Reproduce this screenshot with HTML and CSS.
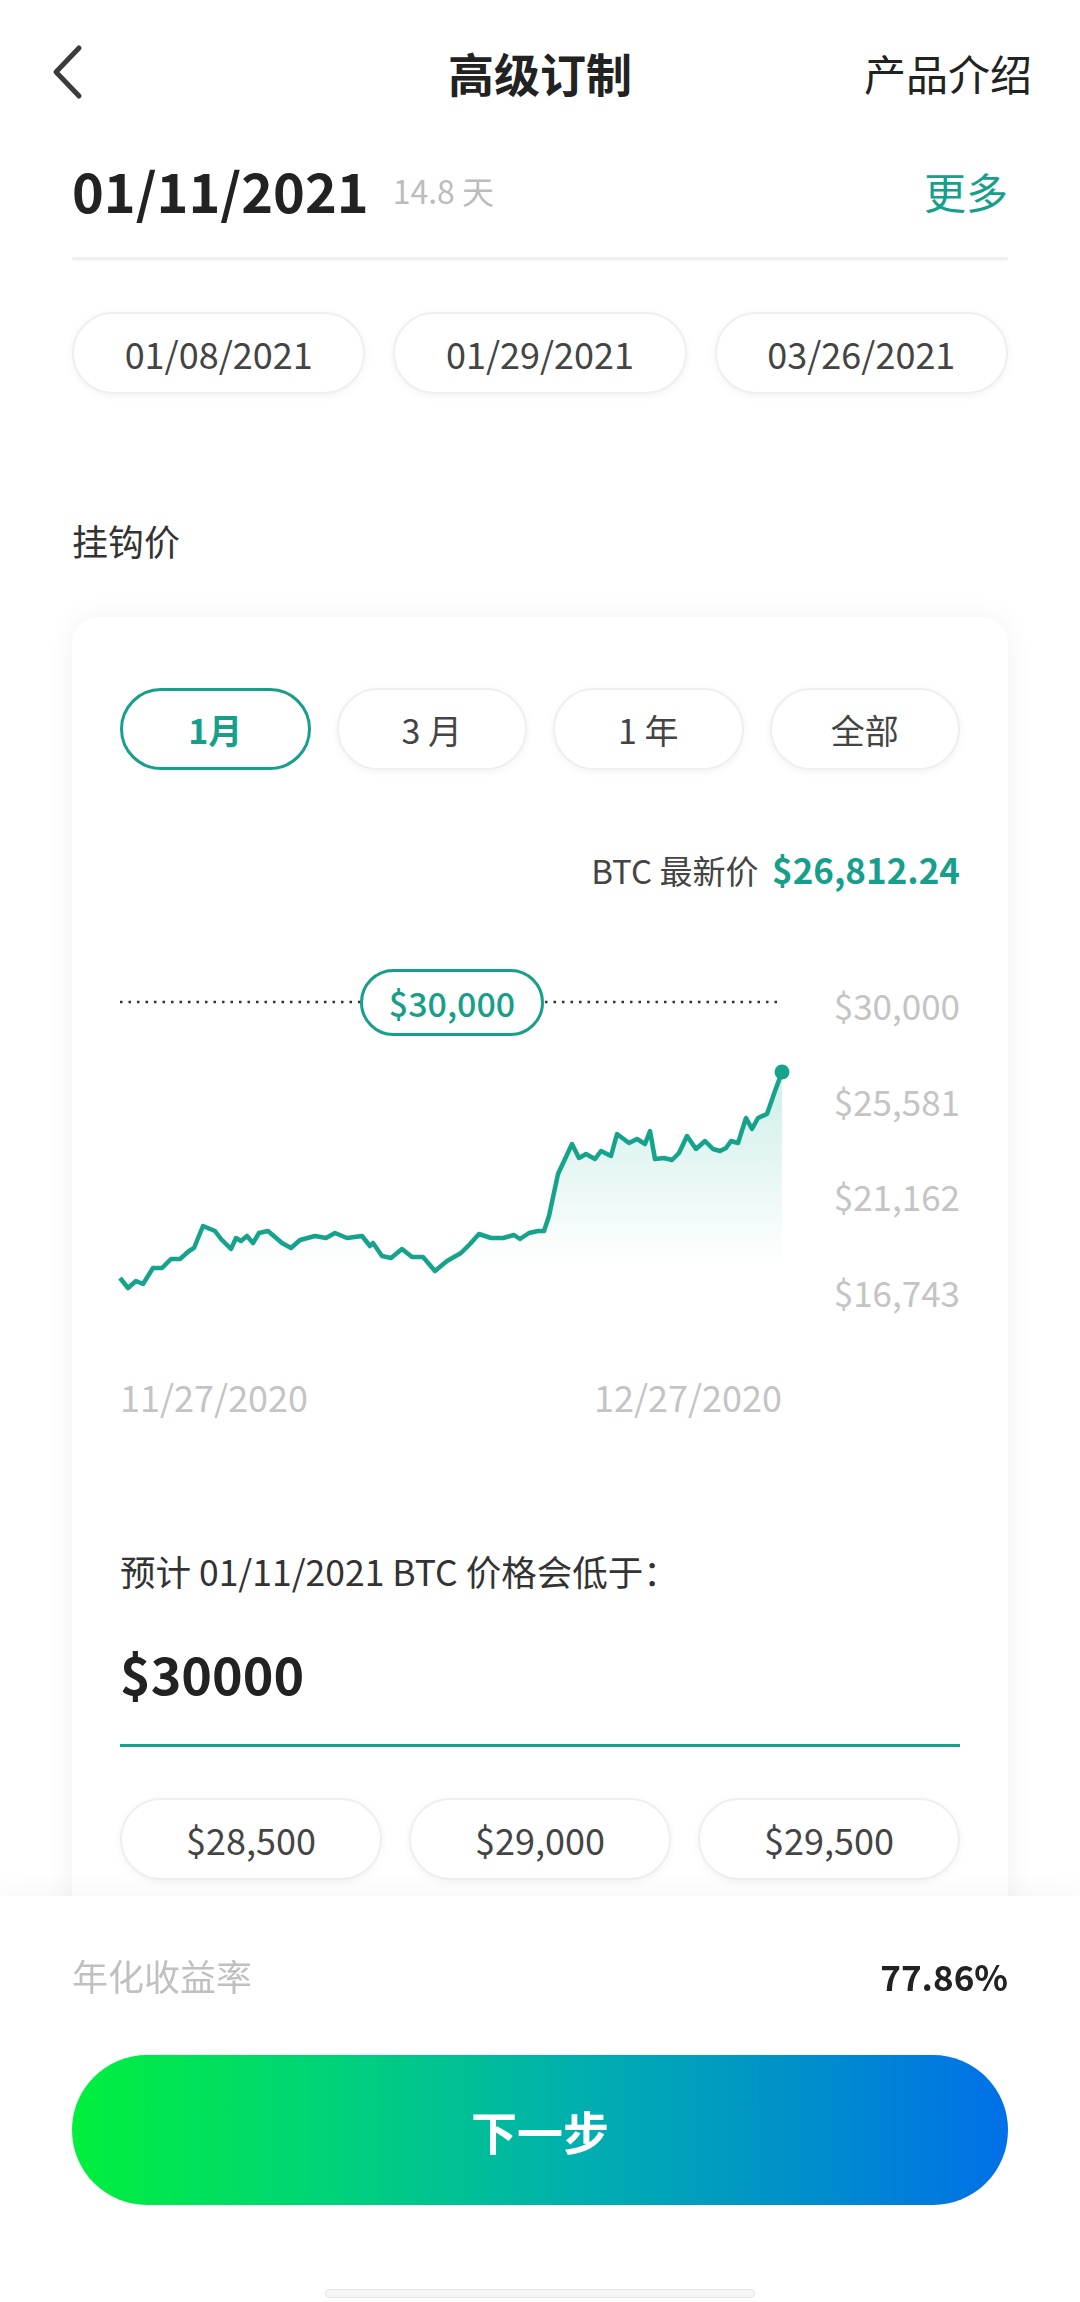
FILE: index.html
```html
<html>
<head>
<meta charset="utf-8">
<title>高级订制</title>
<link rel="stylesheet" href="styles.css">
</head>
<body>
<div class="page">

  <div class="topbar">
    <svg class="back" width="40" height="56" viewBox="0 0 40 56">
      <path d="M31 4 L8 28 L31 52" fill="none" stroke="#3c3c3c" stroke-width="5" stroke-linecap="round" stroke-linejoin="round"/>
    </svg>
    <div class="title">高级订制</div>
    <div class="intro">产品介绍</div>
  </div>

  <div class="expiry-row">
    <span class="expiry-date">01/11/2021</span>
    <span class="expiry-days">14.8 天</span>
    <span class="more">更多</span>
  </div>
  <div class="divider"></div>

  <div class="date-options">
    <button type="button" class="pill">01/08/2021</button>
    <button type="button" class="pill">01/29/2021</button>
    <button type="button" class="pill">03/26/2021</button>
  </div>

  <div class="section-label">挂钩价</div>

  <div class="card">
    <div class="periods">
      <button type="button" class="pill period active">1月</button>
      <button type="button" class="pill period">3 月</button>
      <button type="button" class="pill period">1 年</button>
      <button type="button" class="pill period">全部</button>
    </div>

    <div class="latest">
      <span class="latest-label">BTC 最新价</span>
      <span class="latest-value">$26,812.24</span>
    </div>

    <div class="chart">
      <div class="plot">
        <svg width="662" height="360" viewBox="0 0 662 360">
          <defs>
            <linearGradient id="area" x1="0" y1="111" x2="0" y2="305" gradientUnits="userSpaceOnUse">
              <stop offset="0" stop-color="#1fb39b" stop-opacity="0.22"/>
              <stop offset="1" stop-color="#1fb39b" stop-opacity="0"/>
            </linearGradient>
          </defs>
          <line x1="0" y1="41" x2="662" y2="41" stroke="#333" stroke-width="2.5" stroke-dasharray="2.5 6"/>
          <path fill="url(#area)" d="M0 317 L8 327 L16 320 L23 323 L33 307 L42 307 L51 298 L60 298 L69 290 L74 287 L83 265 L95 270 L101 278 L111 288 L116 277 L121 280 L127 275 L133 282 L139 272 L148 270 L162 282 L171 287 L180 279 L195 275 L206 277 L215 272 L227 277 L242 275 L250 285 L253 282 L262 295 L271 297 L282 288 L292 296 L303 296 L315 310 L327 300 L341 292 L350 283 L359 273 L371 277 L383 277 L394 274 L400 278 L409 272 L418 270 L424 270 L429 255 L438 213 L452 183 L459 197 L466 193 L475 198 L481 190 L491 195 L497 173 L509 182 L517 178 L525 183 L530 170 L535 198 L544 197 L552 199 L559 192 L567 175 L576 188 L585 180 L593 188 L600 190 L606 187 L611 180 L618 182 L626 157 L632 168 L638 157 L647 153 L655 130 L662 111 L662 330 L0 330 Z"/>
          <path fill="none" stroke="#16a38c" stroke-width="4.5" stroke-linejoin="round" d="M0 317 L8 327 L16 320 L23 323 L33 307 L42 307 L51 298 L60 298 L69 290 L74 287 L83 265 L95 270 L101 278 L111 288 L116 277 L121 280 L127 275 L133 282 L139 272 L148 270 L162 282 L171 287 L180 279 L195 275 L206 277 L215 272 L227 277 L242 275 L250 285 L253 282 L262 295 L271 297 L282 288 L292 296 L303 296 L315 310 L327 300 L341 292 L350 283 L359 273 L371 277 L383 277 L394 274 L400 278 L409 272 L418 270 L424 270 L429 255 L438 213 L452 183 L459 197 L466 193 L475 198 L481 190 L491 195 L497 173 L509 182 L517 178 L525 183 L530 170 L535 198 L544 197 L552 199 L559 192 L567 175 L576 188 L585 180 L593 188 L600 190 L606 187 L611 180 L618 182 L626 157 L632 168 L638 157 L647 153 L655 130 L662 111"/>
          <circle cx="662" cy="111" r="7.5" fill="#16a38c"/>
        </svg>
        <div class="strike-tag">$30,000</div>
      </div>
      <div class="y-axis">
        <span>$30,000</span>
        <span>$25,581</span>
        <span>$21,162</span>
        <span>$16,743</span>
      </div>
    </div>

    <div class="x-axis">
      <span>11/27/2020</span>
      <span>12/27/2020</span>
    </div>

    <div class="question">预计 01/11/2021 BTC 价格会低于：</div>
    <div class="amount">$30000</div>

    <div class="price-options">
      <button type="button" class="pill">$28,500</button>
      <button type="button" class="pill">$29,000</button>
      <button type="button" class="pill">$29,500</button>
    </div>
  </div>

</div>

<div class="footer">
  <div class="yield-row">
    <span class="yield-label">年化收益率</span>
    <span class="yield-value">77.86%</span>
  </div>
  <button type="button" class="next">下一步</button>
  <div class="home-bar"></div>
</div>
</body>
</html>
```

FILE: styles.css
```css
html {
  box-sizing: border-box;
}

*, *::before, *::after {
  margin: 0;
  padding: 0;
  box-sizing: inherit;
}

body {
  width: 1080px;
  height: 2302px;
  overflow: hidden;
  background: #fff;
  font-family: "Noto Sans CJK SC", "Noto Sans", sans-serif;
  color: #222;
}

button {
  font-family: inherit;
  background: #fff;
  cursor: pointer;
}

.page {
  padding: 0 72px;
}

.topbar {
  height: 144px;
  margin: 0 -24px;
  display: grid;
  grid-template-columns: 1fr auto 1fr;
  align-items: center;
}

.back {
  overflow: visible;
}

.title {
  font-size: 46px;
  font-weight: 700;
  color: #222;
}

.intro {
  justify-self: end;
  font-size: 42px;
  color: #222;
}

.expiry-row {
  height: 90px;
  display: flex;
  align-items: center;
  padding-top: 2px;
}

.expiry-date {
  font-size: 54px;
  font-weight: 700;
  color: #222;
  line-height: 1;
}

.expiry-days {
  margin-left: 24px;
  font-size: 32px;
  color: #bcbcbc;
}

.more {
  margin-left: auto;
  font-size: 42px;
  color: #16a08b;
}

.divider {
  margin-top: 23px;
  height: 3px;
  background: #efefef;
  border-radius: 2px;
  box-shadow: 0 1px 3px rgba(0, 0, 0, 0.04);
}

.pill {
  height: 82px;
  border: 2px solid #efefef;
  border-radius: 41px;
  box-shadow: 0 2px 8px rgba(0, 0, 0, 0.05);
  font-size: 36px;
  color: #444;
}

.date-options {
  margin-top: 52px;
  display: grid;
  grid-template-columns: repeat(3, 1fr);
  gap: 28px;
}

.section-label {
  margin-top: 121px;
  font-size: 36px;
  line-height: 50px;
  color: #333;
}

.card {
  margin-top: 52px;
  padding: 71px 48px 120px;
  border-radius: 26px;
  background: #fff;
  box-shadow: 0 0 28px rgba(0, 0, 0, 0.06);
}

.periods {
  display: grid;
  grid-template-columns: repeat(4, 1fr);
  gap: 26px;
}

.period {
  font-size: 34px;
}

.period.active {
  border: 3px solid #179f8a;
  box-shadow: none;
  color: #179f8a;
  font-weight: 700;
}

.latest {
  margin-top: 76px;
  text-align: right;
  line-height: 45px;
}

.latest-label {
  font-size: 33px;
  color: #444;
}

.latest-value {
  margin-left: 10px;
  font-size: 35px;
  font-weight: 700;
  color: #16a08b;
}

.chart {
  margin-top: 61px;
  display: grid;
  grid-template-columns: 662px 1fr;
}

.plot {
  position: relative;
  height: 360px;
}

.plot svg {
  display: block;
  overflow: visible;
}

.strike-tag {
  position: absolute;
  left: 240px;
  top: 8px;
  width: 184px;
  height: 67px;
  border: 3px solid #179f8a;
  border-radius: 34px;
  background: #fff;
  color: #179f8a;
  font-size: 34px;
  font-weight: 500;
  line-height: 61px;
  text-align: center;
}

.y-axis {
  display: flex;
  flex-direction: column;
  align-items: flex-end;
  padding-top: 20px;
  gap: 47.7px;
  font-size: 35px;
  line-height: 48px;
  color: #c4c4c4;
}

.x-axis {
  margin-top: 51px;
  width: 662px;
  display: flex;
  justify-content: space-between;
  font-size: 36px;
  line-height: 48px;
  color: #c4c4c4;
}

.question {
  margin-top: 127px;
  font-size: 35.5px;
  line-height: 48px;
  color: #333;
}

.amount {
  margin-top: 38px;
  padding-bottom: 31px;
  border-bottom: 3px solid #179f8a;
  font-size: 52px;
  font-weight: 700;
  line-height: 80px;
  color: #222;
}

.price-options {
  margin-top: 51px;
  display: grid;
  grid-template-columns: repeat(3, 1fr);
  gap: 27px;
}

.footer {
  position: fixed;
  left: 0;
  right: 0;
  bottom: 0;
  height: 406px;
  padding: 54px 72px 0;
  background: #fff;
  box-shadow: 0 -6px 24px rgba(0, 0, 0, 0.04);
}

.yield-row {
  display: flex;
  justify-content: space-between;
  align-items: baseline;
  line-height: 50px;
}

.yield-label {
  font-size: 36px;
  color: #c0c0c0;
}

.yield-value {
  font-size: 35px;
  font-weight: 700;
  color: #222;
}

.next {
  display: block;
  width: 100%;
  height: 150px;
  margin-top: 54px;
  border: none;
  border-radius: 75px;
  background: linear-gradient(90deg, #00f03c 0%, #00d27a 28%, #00aeb0 55%, #0092c8 76%, #0070e8 100%);
  color: #fff;
  font-size: 46px;
  font-weight: 700;
}

.home-bar {
  width: 430px;
  height: 9px;
  margin: 84px auto 0;
  border: 1px solid #e6e6e6;
  border-radius: 5px;
  background: #f6f6f6;
}
```
